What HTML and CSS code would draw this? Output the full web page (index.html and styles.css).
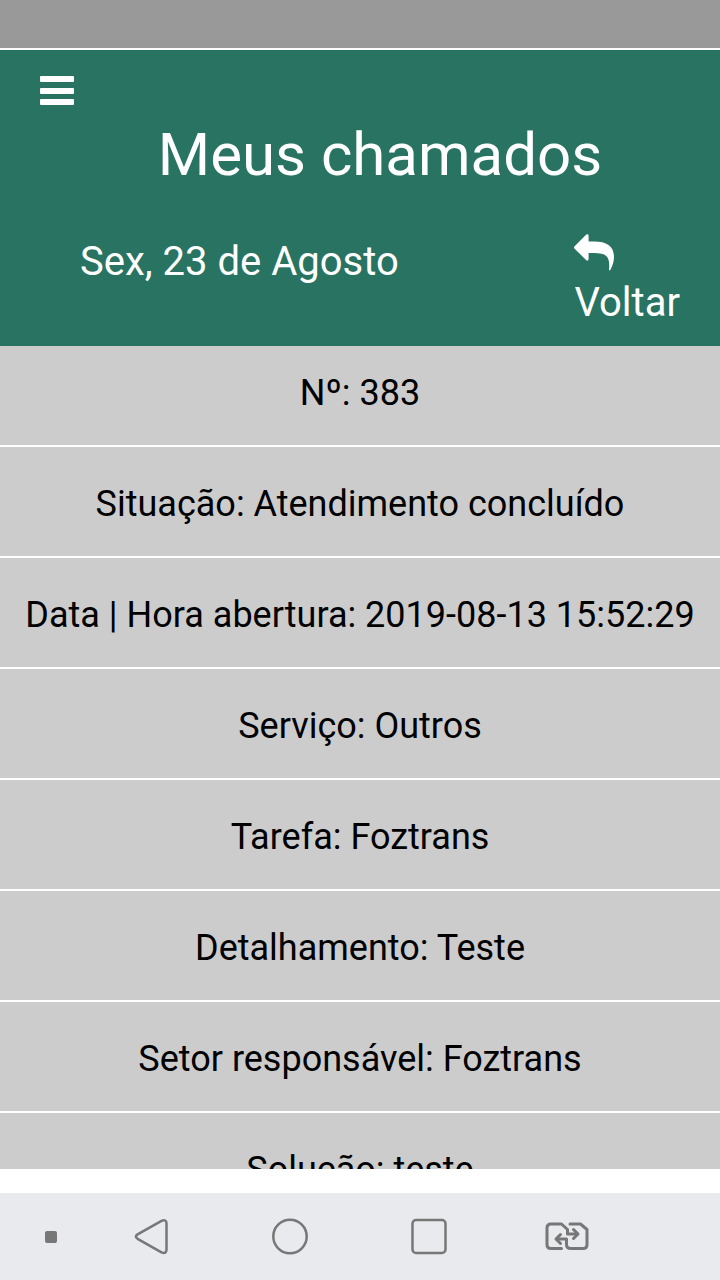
FILE: index.html
```html
<!DOCTYPE html>
<html lang="pt-BR">
<head>
    <meta charset="UTF-8">
    <meta name="viewport" content="width=device-width, initial-scale=1.0">
    <title>Meus chamados</title>
    <link rel="stylesheet" href="styles.css">
</head>
<body>
    <div class="status-bar"></div>

    <!-- Header -->
    <header class="header">
        <button class="menu-btn" type="button" aria-label="Menu">
            <svg width="34" height="30" viewBox="0 0 34 30">
                <rect x="0" y="0" width="34" height="6" rx="1"/>
                <rect x="0" y="12" width="34" height="6" rx="1"/>
                <rect x="0" y="23" width="34" height="6" rx="1"/>
            </svg>
        </button>
        <h1>Meus chamados</h1>
        <div class="header-row">
            <span class="date">Sex, 23 de Agosto</span>
            <a class="back" href="#">
                <svg width="40" height="38" viewBox="0 0 40 38">
                    <path d="M0.4 12.6 L12.3 0.5 Q14.3 -0.6 14.6 1.6 V7.6 H20 C33 7.6 40 12.5 40 23 C40 27.5 38.6 31.5 36.6 35.5 Q35.3 37.5 35 35.5 C36.3 22 32 19 20 19 H14.6 V25 Q14.3 27.5 12.3 26.3 L0.4 14.4 Q-0.3 13.5 0.4 12.6 Z"/>
                </svg>
                <span>Voltar</span>
            </a>
        </div>
    </header>

    <!-- Ticket details -->
    <main class="details">
        <ul>
            <li>Nº: 383</li>
            <li>Situação: Atendimento concluído</li>
            <li>Data | Hora abertura: 2019-08-13 15:52:29</li>
            <li>Serviço: Outros</li>
            <li>Tarefa: Foztrans</li>
            <li>Detalhamento: Teste</li>
            <li>Setor responsável: Foztrans</li>
            <li>Solução: teste</li>
        </ul>
    </main>

    <!-- System navigation -->
    <nav class="nav-bar">
        <span class="nav-dot"></span>
        <button type="button" aria-label="Voltar">
            <svg width="44" height="44" viewBox="0 0 44 44">
                <path d="M7.6 19.4 L31.5 5.8 Q36.5 3.8 36.5 8.5 V34.5 Q36.500 39.2 31.500 37.400 L7.600 23.800 Q4.200 21.600 7.600 19.400 Z"/>
            </svg>
        </button>
        <button type="button" aria-label="Início">
            <svg width="44" height="44" viewBox="0 0 44 44">
                <circle cx="22" cy="21.5" r="16.7"/>
            </svg>
        </button>
        <button type="button" aria-label="Recentes">
            <svg width="44" height="44" viewBox="0 0 44 44">
                <rect x="5.5" y="5" width="33" height="33" rx="3.5"/>
            </svg>
        </button>
        <button type="button" aria-label="Alternar">
            <svg width="44" height="44" viewBox="0 0 44 44">
                <path class="thick" d="M16.500 33.500 H6 Q2 33.500 2 29.500 V13 Q2 9 6 9 H16.500 L22.500 14.500 V19 H32"/>
                <path class="thick" d="M28.500 14.500 L33 19 L28.500 23.500"/>
                <path class="thick" d="M25 9 H35.500 L42 14.500 V29.500 Q42 33.500 38 33.500 H26 Q21.500 33.500 21.500 29.500 V24 H12"/>
                <path class="thick" d="M15.500 19.500 L11 24 L15.500 28.500"/>
            </svg>
        </button>
    </nav>
</body>
</html>
```
FILE: styles.css
```css
* {
    box-sizing: border-box;
}

body {
    font-family: Roboto, Arial, sans-serif;
    margin: 0;
    height: 100vh;
    display: flex;
    flex-direction: column;
    background-color: #fff;
}

button {
    padding: 0;
    border: none;
    background: none;
    cursor: pointer;
}

svg {
    display: block;
}

.status-bar {
    height: 48px;
    flex-shrink: 0;
    background-color: #999;
}

.header {
    margin-top: 2px;
    padding: 26px 40px 19px;
    flex-shrink: 0;
    background-color: #287361;
    color: #fff;
}

.header svg {
    fill: #fff;
}

.menu-btn {
    display: block;
}

h1 {
    margin: 13px 0 43px;
    padding-left: 40px;
    font-size: 60px;
    font-weight: normal;
    line-height: 72px;
    text-align: center;
}

.header-row {
    display: flex;
    justify-content: space-between;
    align-items: flex-start;
    padding-left: 40px;
    font-size: 40px;
    line-height: 48px;
}

.date {
    padding-top: 4px;
}

.back {
    color: #fff;
    text-decoration: none;
}

.back span {
    display: block;
    margin-top: 7px;
}

.details {
    flex: 1;
    min-height: 0;
    overflow: hidden;
    background-color: #ccc;
}

.details ul {
    list-style: none;
    margin: 0;
    padding: 0;
}

.details li {
    padding: 36px 16px 31px;
    border-bottom: 2px solid #fff;
    font-size: 36px;
    line-height: 42px;
    text-align: center;
}

.details li:first-child {
    padding-top: 26px;
}

.nav-bar {
    display: flex;
    align-items: center;
    flex-shrink: 0;
    height: 87px;
    margin-top: 24px;
    padding: 0 84px 0 45px;
    background-color: #e9eaed;
}

.nav-bar button {
    flex: 1;
}

.nav-bar svg {
    margin: 0 auto;
    fill: none;
    stroke: #777;
    stroke-width: 2.5px;
    stroke-linejoin: round;
    stroke-linecap: round;
}

.nav-bar .thick {
    stroke-width: 3px;
}

.nav-dot {
    width: 12px;
    height: 12px;
    margin-right: 26px;
    border-radius: 2px;
    background-color: #777;
}
```
